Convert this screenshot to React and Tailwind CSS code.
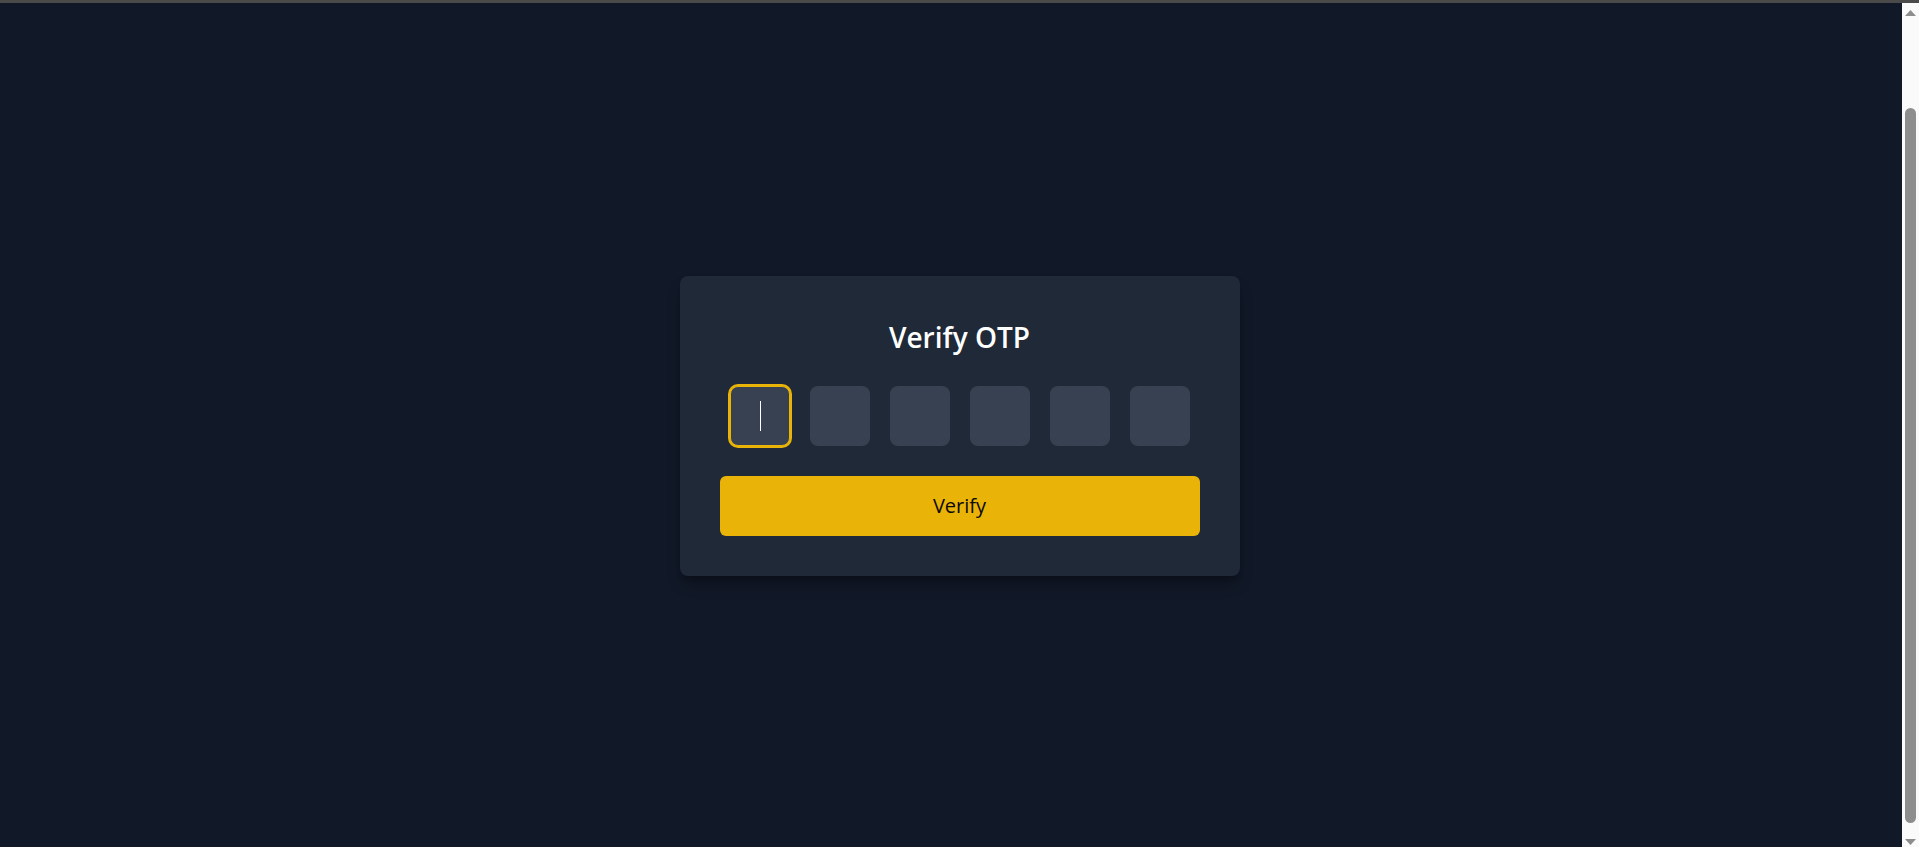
import React from "react";

function ScrollbarArrow({ down }) {
  return (
    <svg width="11" height="6" viewBox="0 0 11 6" className="block">
      {down ? (
        <polygon points="0,0 11,0 5.5,6" fill="#8d8d8d" />
      ) : (
        <polygon points="5.5,0 11,6 0,6" fill="#8d8d8d" />
      )}
    </svg>
  );
}

export default function App() {
  const boxes = [0, 1, 2, 3, 4, 5];
  return (
    <div
      className="relative w-full h-[847px] overflow-hidden bg-[#111827] flex flex-col"
      style={{ fontFamily: '"Open Sans", "Noto Sans", Arial, sans-serif' }}
    >
      <div className="h-[3px] w-full bg-[#4a4a4a] shrink-0" />
      <div className="flex-1 flex items-center justify-center pt-[2px]">
        <div className="w-[560px] bg-[#1f2937] rounded-lg shadow-lg shadow-black/30 pt-[43px] px-10 pb-10">
          <h1 className="text-[28px] leading-9 font-semibold text-white text-center mb-[31px]">
            Verify OTP
          </h1>
          <div className="flex justify-center gap-5">
            {boxes.map((i) => (
              <div key={i} className="relative w-[60px] h-[60px]">
                <input
                  type="text"
                  maxLength={1}
                  className={
                    i === 0
                      ? "w-[60px] h-[60px] rounded-lg bg-[#374151] border border-[#eab308] text-white text-2xl text-center outline-none caret-transparent ring-2 ring-[#eab308]"
                      : "w-[60px] h-[60px] rounded-lg bg-[#374151] text-white text-2xl text-center outline-none caret-transparent"
                  }
                />
                {i === 0 && (
                  <span className="absolute left-[30px] top-[15px] w-px h-[30px] bg-white pointer-events-none" />
                )}
              </div>
            ))}
          </div>
          <button className="mt-[30px] w-full rounded-md bg-[#eab308] py-4 text-xl leading-7 font-medium text-[#0a0a0a]">
            Verify
          </button>
        </div>
      </div>
      <div className="absolute right-0 top-[3px] bottom-0 w-[17px] bg-[#fafafa] flex flex-col items-center">
        <div className="mt-[7px]">
          <ScrollbarArrow />
        </div>
        <div className="mt-[92px] w-[11px] h-[715px] rounded-full bg-[#8d8d8d]" />
        <div className="mt-[16px]">
          <ScrollbarArrow down />
        </div>
      </div>
    </div>
  );
}
